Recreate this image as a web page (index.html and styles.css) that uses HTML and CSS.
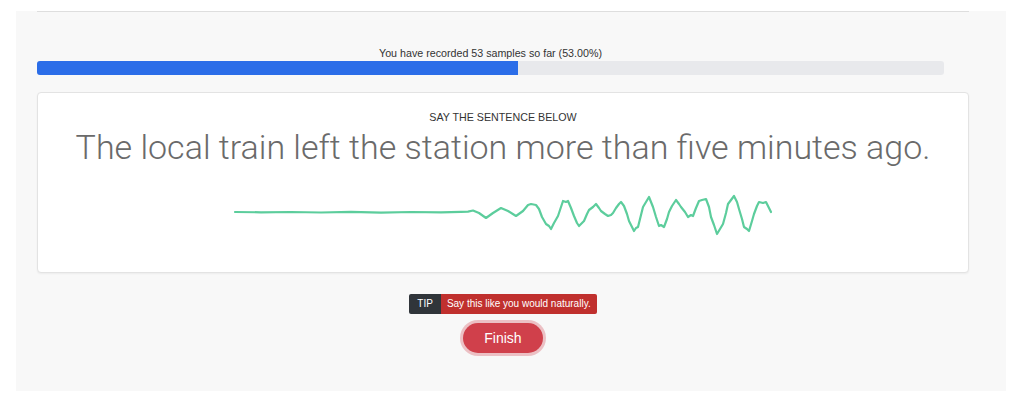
FILE: index.html
```html
<!DOCTYPE html>
<html lang="en">
<head>
<meta charset="utf-8">
<title>Record samples</title>
<link rel="stylesheet" href="styles.css">
</head>
<body>
<div class="panel">
  <div class="inner">
    <div class="progress-block">
      <div class="progress-label">You have recorded 53 samples so far (53.00%)</div>
      <div class="progress-track"><div class="progress-fill" style="width:53%"></div></div>
    </div>
    <div class="card">
      <div class="card-title">SAY THE SENTENCE BELOW</div>
      <div class="sentence">The local train left the station more than five minutes ago.</div>
      <svg class="wave" width="544" height="52" viewBox="230 188 544 52" xmlns="http://www.w3.org/2000/svg">
        <polyline fill="none" stroke="#5ccd9c" stroke-width="2.2" stroke-linejoin="round" stroke-linecap="round"
          points="234,213 260,213.3 290,213 320,213.5 350,212.8 380,213.6 410,213 440,213.4 460,212.8 467,212.6 472,211.5 478,214 485,219 492,214 500,209 507,212 515,217 522,212 527,206 530,205 535,206 538,210 541,218 545,225 548,227 550,230 553,224 557,217 560,208 562,202 565,203 567,202 570,209 573,217 576,224 578,227 581,224 583,222 586,215 588,211 592,208 595,205 598,209 600,212 604,215 607,217 610,216 612,214 615,209 618,205 620,203 623,207 626,215 628,222 631,228 633,232 635,229 637,228 640,216 642,208 645,203 648,198 650,203 652,208 655,218 658,227 660,226 663,228 666,220 668,213 671,207 675,201 678,205 680,208 684,213 687,218 690,216 692,217 695,209 698,202 701,201 705,200 708,208 710,218 713,226 716,235 719,230 722,225 725,214 727,205 730,201 733,197 736,203 738,210 741,220 743,228 746,230 748,232 751,222 753,215 756,207 758,203 762,204 765,203 768,209 770,213"/>
      </svg>
    </div>
    <div class="tip">
      <span class="tip-label">TIP</span><span class="tip-text">Say this like you would naturally.</span>
    </div>
    <button class="finish" type="button">Finish</button>
  </div>
</div>
</body>
</html>
```

FILE: styles.css
```css
html, body {
  margin: 0;
  padding: 0;
  background: #ffffff;
  font-family: "Liberation Sans", Arial, sans-serif;
  color: #333;
}

.panel {
  margin: 11px 18px 0 16px;
  height: 380px;
  background: #f8f8f8;
  padding: 0 37px 0 21px;
  box-sizing: border-box;
}

.inner {
  border-top: 1px solid #dedede;
  display: flex;
  flex-direction: column;
  align-items: center;
}

.progress-block {
  align-self: flex-start;
  width: 907px;
  margin-top: 35px;
}

.progress-label {
  font-size: 10.7px;
  line-height: 13px;
  text-align: center;
  color: #333;
}

.progress-track {
  margin-top: 1px;
  height: 14px;
  background: #e8e9ec;
  border-radius: 3px;
  overflow: hidden;
}

.progress-fill {
  height: 100%;
  background: #2b6de8;
}

.card {
  align-self: stretch;
  margin-top: 17px;
  height: 181px;
  box-sizing: border-box;
  background: #fff;
  border: 1px solid #e3e3e3;
  border-radius: 4px;
  box-shadow: 0 1px 2px rgba(0,0,0,0.05);
  display: flex;
  flex-direction: column;
  align-items: center;
  padding-top: 18px;
}

.card-title {
  font-size: 10.7px;
  line-height: 13px;
  color: #333;
}

.sentence {
  margin-top: 3px;
  font-family: Roboto, "Liberation Sans", sans-serif;
  font-weight: 300;
  font-size: 34px;
  line-height: 40px;
  color: #6a6a6a;
}

.wave {
  display: block;
  margin-top: 20px;
}

.tip {
  margin-top: 21px;
  display: flex;
  height: 20px;
  font-size: 10px;
  line-height: 20px;
  color: #fff;
  border-radius: 2px;
  overflow: hidden;
}

.tip-label {
  background: #30353a;
  padding: 0 8px;
}

.tip-text {
  background: #c0302e;
  padding: 0 6px;
}

.finish {
  margin-top: 9px;
  height: 30px;
  padding: 0 21px;
  border: none;
  border-radius: 15px;
  background: #d0404b;
  color: #fff;
  font-family: "Liberation Sans", Arial, sans-serif;
  font-size: 14px;
  box-shadow: 0 0 0 3px rgba(208, 64, 75, 0.3);
  cursor: pointer;
}
```
